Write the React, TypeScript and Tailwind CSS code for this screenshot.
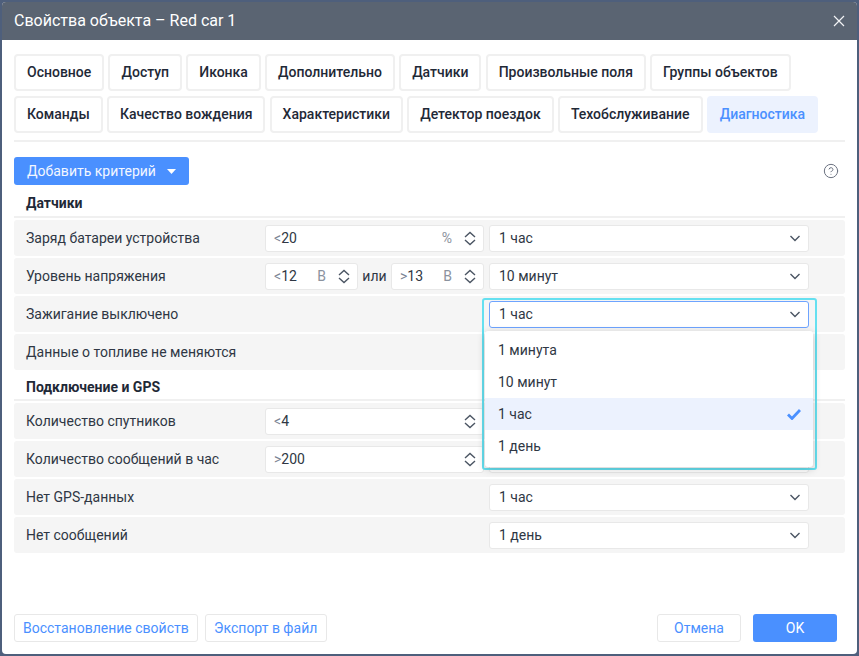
import { CircleHelp } from "lucide-react";

const tabsTop = ["Основное", "Доступ", "Иконка", "Дополнительно", "Датчики", "Произвольные поля", "Группы объектов"];
const tabsBottom = ["Команды", "Качество вождения", "Характеристики", "Детектор поездок", "Техобслуживание", "Диагностика"];

function Spinner() {
  return (
    <svg width="12" height="15" viewBox="0 0 12 15" fill="none" stroke="#4b5563" strokeWidth="1.4" className="shrink-0">
      <path d="M1 6 L6 1.5 L11 6" />
      <path d="M1 9 L6 13.5 L11 9" />
    </svg>
  );
}

function Chevron() {
  return (
    <svg width="12" height="7" viewBox="0 0 12 7" fill="none" stroke="#4b5563" strokeWidth="1.4" className="shrink-0">
      <path d="M1.5 1 L6 5.5 L10.5 1" />
    </svg>
  );
}

function NumInput({ sign, value, unit, className }: { sign: string; value: string; unit?: string; className: string }) {
  return (
    <div className={`flex h-[27px] items-center rounded-[3px] border border-[#e8e8e8] bg-white pl-2 pr-[7px] ${className}`}>
      <span className="text-[#7b8494]">{sign}</span>
      <span>{value}</span>
      <span className="ml-auto mr-[12px] text-[#8b929e]">{unit}</span>
      <Spinner />
    </div>
  );
}

function Select({ value, focused }: { value?: string; focused?: boolean }) {
  return (
    <div
      className={`flex h-[27px] w-[320px] items-center justify-between rounded-[3px] border bg-white pl-[9px] pr-[7px] ${
        focused ? "border-[#6ea4ff]" : "border-[#e8e8e8]"
      }`}
    >
      <span>{value}</span>
      <Chevron />
    </div>
  );
}

function Row({ label, children, select }: { label: string; children?: React.ReactNode; select?: React.ReactNode }) {
  return (
    <div className="flex h-[36px] items-center rounded-[3px] bg-[#f5f5f5] pl-3">
      <div className="w-[239px] shrink-0">{label}</div>
      <div className="flex w-[219px] shrink-0 items-center justify-between">{children}</div>
      <div className="ml-[5px]">{select}</div>
    </div>
  );
}

function Section({ title, className }: { title: string; className: string }) {
  return <div className={`mb-[2px] flex items-center border-b-2 border-[#f0f0f0] pl-3 font-bold text-[#1f2937] ${className}`}>{title}</div>;
}

export default function App() {
  return (
    <div className="h-[656px] w-[859px] bg-[#4e5f7c] p-[2px] font-['Roboto',sans-serif] text-[14px] text-[#2f3744]">
      <div className="relative flex h-[652px] flex-col overflow-hidden rounded-[4px] bg-white">
        <div className="flex h-[38px] shrink-0 items-center justify-between bg-[#5a6472] pl-3 pr-[12px] text-[16px] text-white">
          <span>Свойства объекта – Red car 1</span>
          <svg width="12" height="12" viewBox="0 0 12 12" stroke="#f3f4f6" strokeWidth="1.2">
            <path d="M1 1 L11 11 M11 1 L1 11" />
          </svg>
        </div>

        <div className="flex flex-1 flex-col px-3">
          <div className="mt-[14px] flex flex-col gap-[5px] border-b-2 border-[#f0f0f0] pb-[7px]">
            <div className="flex gap-[4.2px]">
              {tabsTop.map((t) => (
                <div key={t} className="flex h-[37px] items-center rounded-[4px] border-2 border-[#f0f0f0] px-[11px] font-medium text-[#1f2937]">
                  {t}
                </div>
              ))}
            </div>
            <div className="flex gap-[4.2px]">
              {tabsBottom.map((t) =>
                t === "Диагностика" ? (
                  <div key={t} className="flex h-[37px] items-center rounded-[4px] border-2 border-[#ecf2fe] bg-[#ecf2fe] px-[11px] font-medium text-[#4a90ff]">
                    {t}
                  </div>
                ) : (
                  <div key={t} className="flex h-[37px] items-center rounded-[4px] border-2 border-[#f0f0f0] px-[11px] font-medium text-[#1f2937]">
                    {t}
                  </div>
                ),
              )}
            </div>
          </div>

          <div className="mt-[15px] flex items-center justify-between">
            <div className="flex h-[28px] w-[175px] items-center justify-between rounded-[3px] bg-[#4a90ff] pl-[13px] pr-[13px] text-[#f3f7ff]">
              <span>Добавить критерий</span>
              <svg width="9" height="5" viewBox="0 0 9 5" fill="#ffffff">
                <path d="M0 0 H9 L4.5 5 Z" />
              </svg>
            </div>
            <CircleHelp size={16} strokeWidth={1.5} color="#6b7280" className="mr-[6px]" />
          </div>

          <Section title="Датчики" className="h-[33px] pt-[5px]" />
          <div className="flex flex-col gap-[2px]">
            <Row label="Заряд батареи устройства" select={<Select value="1 час" />}>
              <NumInput sign="<" value="20" unit="%" className="w-[219px]" />
            </Row>
            <Row label="Уровень напряжения" select={<Select value="10 минут" />}>
              <NumInput sign="<" value="12" unit="В" className="w-[93px]" />
              <span>или</span>
              <NumInput sign=">" value="13" unit="В" className="w-[93px]" />
            </Row>
            <Row label="Зажигание выключено" select={<Select value="1 час" focused />} />
            <Row label="Данные о топливе не меняются" select={<Select />} />
          </div>

          <Section title="Подключение и GPS" className="h-[31px] pt-[6px]" />
          <div className="flex flex-col gap-[2px]">
            <Row label="Количество спутников" select={<Select />}>
              <NumInput sign="<" value="4" className="w-[219px]" />
            </Row>
            <Row label="Количество сообщений в час" select={<Select />}>
              <NumInput sign=">" value="200" className="w-[219px]" />
            </Row>
            <Row label="Нет GPS-данных" select={<Select value="1 час" />} />
            <Row label="Нет сообщений" select={<Select value="1 день" />} />
          </div>

          <div className="mb-[12px] mt-auto flex items-center gap-[7px] text-[#4a90ff]">
            <div className="flex h-[28px] items-center rounded-[3px] border border-[#e8e8e8] px-2">Восстановление свойств</div>
            <div className="flex h-[28px] w-[122px] items-center justify-center rounded-[3px] border border-[#e8e8e8]">Экспорт в файл</div>
            <div className="ml-auto flex h-[28px] w-[84px] items-center justify-center rounded-[3px] border border-[#e8e8e8]">Отмена</div>
            <div className="ml-[5px] mr-[8px] flex h-[28px] w-[84px] items-center justify-center rounded-[3px] bg-[#4a90ff] text-white">OK</div>
          </div>
        </div>

        {/* выпадающий список поверх строк */}
        <div className="absolute left-[480px] top-[296px] h-[172px] w-[335px] rounded-[3px] border-2 border-[#65e0f0]">
          <div className="absolute left-[1px] top-[31px] h-[136px] w-[328px] rounded-[3px] bg-white py-[3px] shadow-[0_2px_8px_rgba(0,0,0,0.2)]">
            <div className="flex h-[32px] items-center pl-[13px]">1 минута</div>
            <div className="flex h-[32px] items-center pl-[13px]">10 минут</div>
            <div className="flex h-[32px] items-center justify-between bg-[#ecf2fe] pl-[13px] pr-[12px]">
              <span>1 час</span>
              <svg width="14" height="11" viewBox="0 0 14 11" fill="none" stroke="#4a90ff" strokeWidth="2.8">
                <path d="M1 5.5 L5 9.5 L13 1" />
              </svg>
            </div>
            <div className="flex h-[32px] items-center pl-[13px]">1 день</div>
          </div>
        </div>
      </div>
    </div>
  );
}
